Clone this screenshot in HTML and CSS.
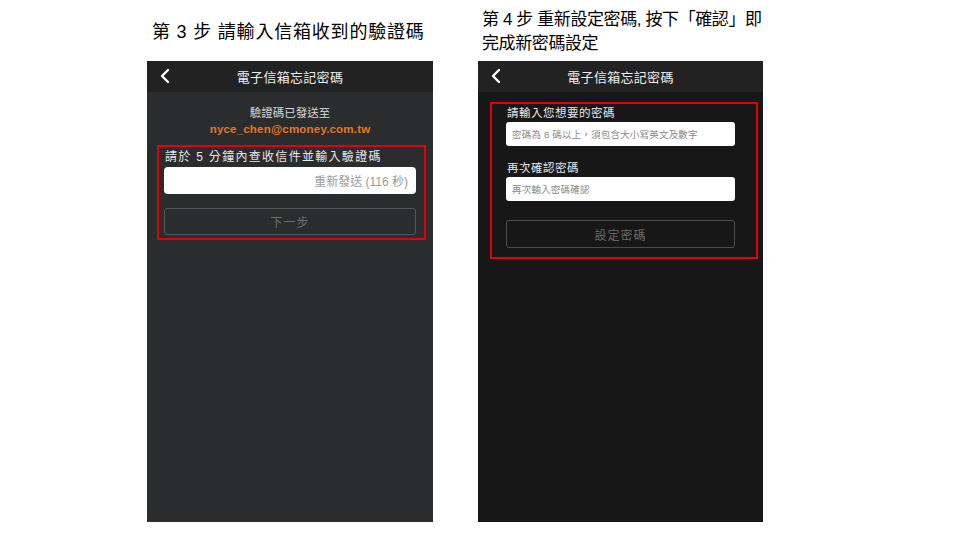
FILE: index.html
```html
<!DOCTYPE html>
<html lang="zh-Hant">
<head>
<meta charset="utf-8">
<title>忘記密碼步驟</title>
<link rel="stylesheet" href="styles.css">
</head>
<body>
<div class="page">
  <section class="step step-3">
    <h2 class="step-title">第 3 步 請輸入信箱收到的驗證碼</h2>
    <div class="phone phone-gray">
      <div class="nav">
        <svg class="back" width="12" height="16" viewBox="0 0 12 16"><path d="M9 2 L3 8 L9 14" fill="none" stroke="#ffffff" stroke-width="2.4" stroke-linecap="round" stroke-linejoin="round"/></svg>
        <span class="nav-title">電子信箱忘記密碼</span>
      </div>
      <div class="body body-3">
        <p class="sent">驗證碼已發送至</p>
        <p class="email">nyce_chen@cmoney.com.tw</p>
        <div class="mark mark-3">
          <p class="label label-3">請於 5 分鐘內查收信件並輸入驗證碼</p>
          <div class="field field-3"><span class="resend">重新發送 (116 秒)</span></div>
          <div class="btn btn-3">下一步</div>
        </div>
      </div>
    </div>
  </section>
  <section class="step step-4">
    <h2 class="step-title">第 4 步 重新設定密碼, 按下「確認」即<br>完成新密碼設定</h2>
    <div class="phone phone-black">
      <div class="nav">
        <svg class="back" width="12" height="16" viewBox="0 0 12 16"><path d="M9 2 L3 8 L9 14" fill="none" stroke="#ffffff" stroke-width="2.4" stroke-linecap="round" stroke-linejoin="round"/></svg>
        <span class="nav-title">電子信箱忘記密碼</span>
      </div>
      <div class="body body-4">
        <div class="mark mark-4">
          <p class="label label-4">請輸入您想要的密碼</p>
          <div class="field field-4"><span class="ph">密碼為 8 碼以上，須包含大小寫英文及數字</span></div>
          <p class="label label-4 label-second">再次確認密碼</p>
          <div class="field field-4"><span class="ph">再次輸入密碼確認</span></div>
          <div class="btn btn-4">設定密碼</div>
        </div>
      </div>
    </div>
  </section>
</div>
</body>
</html>
```
FILE: styles.css
```css
* { box-sizing: border-box; }
html, body { margin: 0; padding: 0; background: #ffffff; }
body {
  width: 960px;
  height: 540px;
  overflow: hidden;
  font-family: "Liberation Sans", "Noto Sans CJK TC", sans-serif;
}
p { margin: 0; }
.page {
  display: flex;
  gap: 45px;
  padding-left: 147px;
}
.step { display: flex; flex-direction: column; }
.step-3 { width: 286px; }
.step-4 { width: 285px; }
.step-title {
  margin: 0;
  height: 61px;
  padding-top: 3px;
  display: flex;
  align-items: center;
  font-weight: normal;
  line-height: 24px;
  color: #000;
  white-space: nowrap;
}
.step-3 .step-title { padding-left: 5px; font-size: 18px; letter-spacing: 0.8px; }
.step-4 .step-title { padding-left: 4px; font-size: 17px; letter-spacing: -0.4px; }
.phone {
  height: 461px;
  display: flex;
  flex-direction: column;
}
.phone-gray { background: #2b2c2e; }
.phone-black { background: #171717; }
.nav {
  height: 31px;
  background: #222222;
  display: flex;
  align-items: center;
  justify-content: center;
  position: relative;
}
.back { position: absolute; left: 12px; top: 7px; }
.nav-title {
  color: #eeeeee;
  font-size: 13px;
  letter-spacing: 0.3px;
}
.body-3 { padding-top: 13px; }
.sent, .email {
  text-align: center;
  font-size: 11.5px;
  line-height: 16px;
}
.sent { color: #d8d8d8; }
.email { color: #e8761c; font-weight: bold; letter-spacing: 0.2px; }
.mark { border: 2px solid #e0000a; }
.mark-3 {
  margin: 8px 7px 0 10px;
  padding: 2px 8px 3px 5px;
}
.label {
  color: #e8e8e8;
  font-size: 11px;
  line-height: 16px;
  letter-spacing: 0.3px;
  padding-left: 1px;
}
.label-3 { font-size: 12px; letter-spacing: 1.3px; }
.field {
  background: #ffffff;
  border-radius: 4px;
  display: flex;
  align-items: center;
}
.field-3 {
  margin-top: 2px;
  height: 27px;
  justify-content: flex-end;
  padding-right: 8px;
}
.resend { color: #9b9b9b; font-size: 12px; }
.btn {
  border: 1.5px solid #545557;
  border-radius: 3px;
  display: flex;
  align-items: center;
  justify-content: center;
  color: #6e6f71;
  font-size: 12px;
  letter-spacing: 1px;
}
.btn-3 { margin-top: 14px; height: 27px; }
.body-4 { padding-top: 10px; }
.mark-4 {
  margin: 0 5px 0 12px;
  padding: 1px 21px 9px 14px;
}
.label-4 { font-size: 11.5px; letter-spacing: 0.5px; }
.label-second { margin-top: 14px; }
.field-4 {
  margin-top: 1px;
  height: 24px;
  padding-left: 6px;
  border-radius: 3px;
}
.ph { color: #8a8a8a; font-size: 9.5px; letter-spacing: 0.2px; }
.btn-4 { margin-top: 19px; height: 28px; color: #6a6a6a; border-color: #4c4c4c; }
```
